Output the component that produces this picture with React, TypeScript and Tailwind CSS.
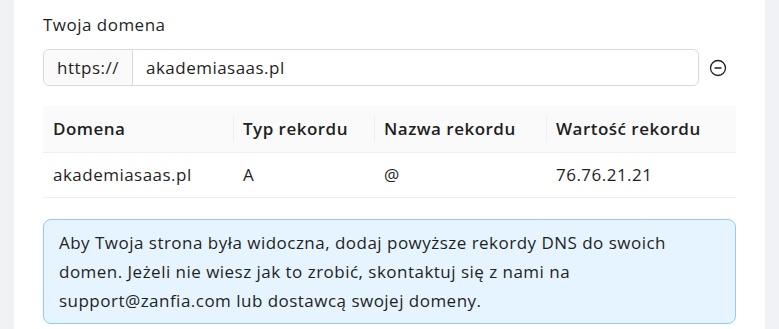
import { CircleMinus } from "lucide-react";

const records = [
  { domain: "akademiasaas.pl", type: "A", name: "@", value: "76.76.21.21" },
];

export default function App() {
  return (
    <div
      className="flex h-[329px] w-full bg-[#f0f2f5] px-[14px] text-[#1f1f1f] tracking-[0.03em]"
      style={{ fontFamily: '"Open Sans", sans-serif' }}
    >
      <div className="flex-1 bg-white px-[29px] pt-[13px]">
        {/* Domain */}
        <div className="text-[17px] leading-[24px]">Twoja domena</div>
        <div className="mt-[12px] flex items-center">
          <div className="flex h-[37px] flex-1 rounded-md border border-[#d9d9d9] text-[17px]">
            <span className="flex w-[89px] items-center justify-center rounded-l-md border-r border-[#d9d9d9] bg-[#fafafa]">
              https://
            </span>
            <span className="flex items-center pl-[13px]">akademiasaas.pl</span>
          </div>
          <div className="flex w-[37px] justify-center">
            <CircleMinus className="h-[18px] w-[18px]" strokeWidth={1.7} />
          </div>
        </div>

        {/* DNS table */}
        <table className="mt-[20px] w-full border-collapse text-left text-[17px]">
          <thead>
            <tr className="h-[46px] border-b border-[#f0f0f0] bg-[#fafafa]">
              <th className="w-[190px] px-[10px] font-semibold">Domena</th>
              <th className="w-[141px] px-[10px] font-semibold">
                <span className="relative block before:absolute before:-left-[10px] before:top-1/2 before:h-[27px] before:w-px before:-translate-y-1/2 before:bg-[#f0f0f0]">
                  Typ rekordu
                </span>
              </th>
              <th className="w-[172px] px-[10px] font-semibold">
                <span className="relative block before:absolute before:-left-[10px] before:top-1/2 before:h-[27px] before:w-px before:-translate-y-1/2 before:bg-[#f0f0f0]">
                  Nazwa rekordu
                </span>
              </th>
              <th className="px-[10px] font-semibold">
                <span className="relative block before:absolute before:-left-[10px] before:top-1/2 before:h-[27px] before:w-px before:-translate-y-1/2 before:bg-[#f0f0f0]">
                  Wartość rekordu
                </span>
              </th>
            </tr>
          </thead>
          <tbody>
            {records.map((r) => (
              <tr key={r.domain} className="h-[45px] border-b border-[#f0f0f0]">
                <td className="px-[10px]">{r.domain}</td>
                <td className="px-[10px]">{r.type}</td>
                <td className="px-[10px]">{r.name}</td>
                <td className="px-[10px]">{r.value}</td>
              </tr>
            ))}
          </tbody>
        </table>

        {/* Info */}
        <div className="mt-[21px] rounded-lg border border-[#91caff] bg-[#e6f4ff] px-[15px] py-[8px] text-[17px] leading-[29px]">
          Aby Twoja strona była widoczna, dodaj powyższe rekordy DNS do swoich
          domen. Jeżeli nie wiesz jak to zrobić, skontaktuj się z nami na
          support@zanfia.com lub dostawcą swojej domeny.
        </div>
      </div>
    </div>
  );
}
